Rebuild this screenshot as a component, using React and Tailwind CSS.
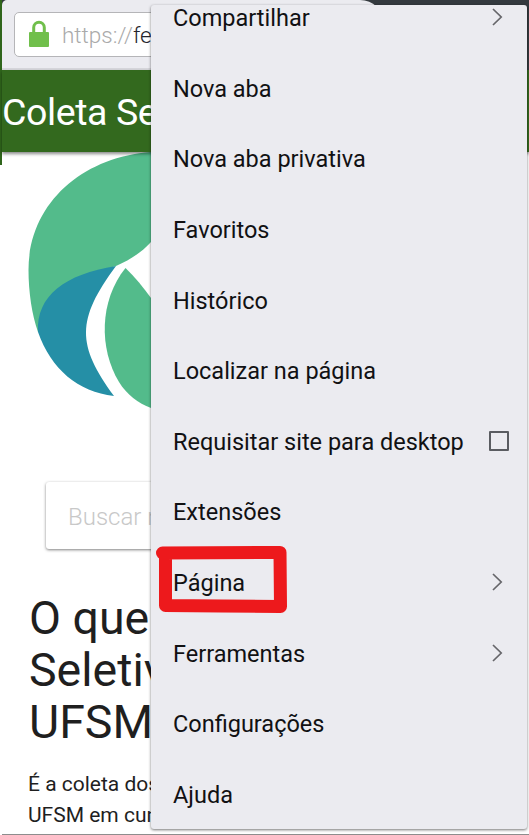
const items = [
  { label: 'Compartilhar', arrow: true },
  { label: 'Nova aba' },
  { label: 'Nova aba privativa' },
  { label: 'Favoritos' },
  { label: 'Histórico' },
  { label: 'Localizar na página' },
  { label: 'Requisitar site para desktop', check: true },
  { label: 'Extensões' },
  { label: 'Página', arrow: true, marked: true },
  { label: 'Ferramentas', arrow: true },
  { label: 'Configurações' },
  { label: 'Ajuda' },
];

function Chevron() {
  return (
    <svg className="mr-[24px] h-[18px] w-[11px]" viewBox="0 0 11 18" fill="none" stroke="#66666a" strokeWidth="1.7">
      <path d="M1 1L9.2 9L1 17" />
    </svg>
  );
}

function Marker() {
  return (
    <svg className="absolute -top-[5px] left-0 h-[76px] w-[142px] blur-[0.7px]" viewBox="0 0 142 76" fill="none" stroke="#ed191c" strokeWidth="13" strokeLinecap="round" strokeLinejoin="round">
      <path d="M11.5 11L129 10.500L129.500 64.500L70 64L14.500 63.500L14.500 14" />
    </svg>
  );
}

function Menu() {
  return (
    <div className="absolute left-[151px] top-[5px] flex h-[824px] w-[376px] flex-col justify-end overflow-clip rounded-[3px] bg-[#ebebf0] shadow-[0_1px_3px_rgba(0,0,0,0.55)]">
      {items.map((item) => (
        <div key={item.label} className="relative flex h-[70.6px] shrink-0 items-center justify-between pl-[22px]">
          <span className="whitespace-nowrap pt-[2px] text-[23.5px] leading-[24px] text-[#111113]">{item.label}</span>
          {item.arrow && <Chevron />}
          {item.check && <span className="mr-[18px] size-[20px] rounded-[1px] border-2 border-[#5a5c61]" />}
          {item.marked && <Marker />}
        </div>
      ))}
    </div>
  );
}

function Logo() {
  return (
    <svg className="block h-[330px] w-[149px] shrink-0" viewBox="2 152 149 330">
      <path fill="#53bb8b" d="M151 152C82 157 28.500 204 28.500 270C28.500 292 32 315 38 332C55 300 85 275 116 266C130 260 142 252 151 242Z" />
      <path fill="#258fa6" d="M116 266C65 274 36 296 38 332C51 369 78 392 114 396C77 345 76 320 116 266Z" />
      <path fill="#53bb8b" d="M125.500 268C99 301 99 349 119 382C127 395 138 403 151 408V298C143 287 135 277 125.500 268Z" />
    </svg>
  );
}

export default function App() {
  return (
    <div className="relative flex h-[835px] w-[529px] overflow-hidden bg-white font-['Roboto',sans-serif]">
      <div className="h-[165px] w-[2px] shrink-0 bg-[#2f651b]" />
      <div className="flex h-[835px] min-w-0 grow flex-col border-b border-[#8d8d8d]">
        <div className="flex h-[70px] shrink-0 bg-[#343a3f]">
          <div className="flex w-[382px] items-start rounded-tl-[5px] rounded-tr-[24px] border-b-2 border-[#d6d6db] bg-[#ebebf0] pl-[12px] pt-[12px]">
            <div className="flex h-[45px] w-[340px] items-center rounded-[5px] border border-[#b5b5b8] bg-white pl-[14px]">
              <svg className="mb-[2px] h-[27px] w-[20px]" viewBox="0 0 20 27">
                <path d="M4.700 13V7.500a5.300 5.300 0 0 1 10.600 0V13" fill="none" stroke="#70bf4b" strokeWidth="3" />
                <rect y="12" width="20" height="15" rx="1" fill="#70bf4b" />
              </svg>
              <span className="ml-[13px] text-[22.5px] font-light leading-[28px] text-[#aaaaaa]">https://<span className="text-[#25252d]">fe</span></span>
            </div>
          </div>
        </div>
        <header className="relative flex h-[82px] shrink-0 items-center bg-[#33691e] shadow-[0_2px_3px_rgba(0,0,0,0.45)]">
          <h1 className="pt-[2px] text-[37.5px] leading-[46px] tracking-[-0.4px] text-white">Coleta Se</h1>
        </header>
        <Logo />
        <div className="ml-[44px] flex h-[67px] w-[420px] shrink-0 items-center rounded-[3px] bg-white pl-[22px] shadow-[0_1px_3px_rgba(0,0,0,0.5)]">
          <span className="pt-[2px] text-[24px] font-light text-[#c8c8c8]">Buscar n</span>
        </div>
        <h2 className="ml-[27px] mt-[43px] text-[46.5px] leading-[52px] text-[#1f1f1f]">O que<br />Seletiv<br />UFSM</h2>
        <p className="ml-[26px] mt-[21px] text-[21px] leading-[31px] text-[#1f1f1f]">É a coleta dos<br />UFSM em cun</p>
      </div>
      <Menu />
    </div>
  );
}
